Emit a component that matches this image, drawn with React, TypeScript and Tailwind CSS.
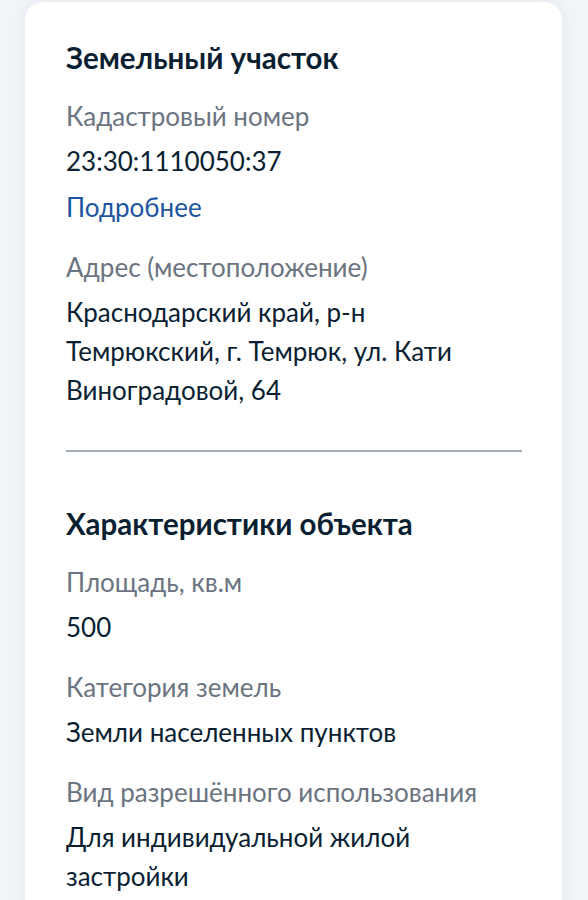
const font = { fontFamily: 'Lato, "Noto Sans", sans-serif' };

function Field({ label, children }: { label: string; children: React.ReactNode }) {
  return (
    <div className="mt-[21px]">
      <div className="text-[26px] leading-[39px] text-[#6b7480]">{label}</div>
      <div className="mt-[6px] text-[26px] leading-[39px] text-[#0b1f33]">{children}</div>
    </div>
  );
}

export default function App() {
  return (
    <div className="min-h-[900px] bg-[#f1f4f8] pt-[2px] pl-[25px] pr-[26px] overflow-hidden" style={font}>
      <div className="bg-white rounded-[18px] shadow-[0_0_12px_rgba(180,195,215,0.25)] px-[41px] pr-[40px] pt-[38px] pb-[40px]">
        <h2 className="text-[29.5px] leading-[36px] font-bold text-[#0b1f33]">Земельный участок</h2>
        <div className="mt-[1.5px]">
          <Field label="Кадастровый номер">23:30:1110050:37</Field>
        </div>
        <div className="mt-[7px] text-[26px] leading-[39px] text-[#1d55a0]">Подробнее</div>
        <Field label="Адрес (местоположение)">
          Краснодарский край, р-н
          <br />
          Темрюкский, г. Темрюк, ул. Кати
          <br />
          Виноградовой, 64
        </Field>
        <div className="mt-[40px] h-[2px] bg-[#a3adba]" />
        <h2 className="mt-[54px] text-[29.5px] leading-[36px] font-bold text-[#0b1f33]">Характеристики объекта</h2>
        <Field label="Площадь, кв.м">500</Field>
        <Field label="Категория земель">Земли населенных пунктов</Field>
        <Field label="Вид разрешённого использования">
          Для индивидуальной жилой
          <br />
          застройки
        </Field>
      </div>
    </div>
  );
}
